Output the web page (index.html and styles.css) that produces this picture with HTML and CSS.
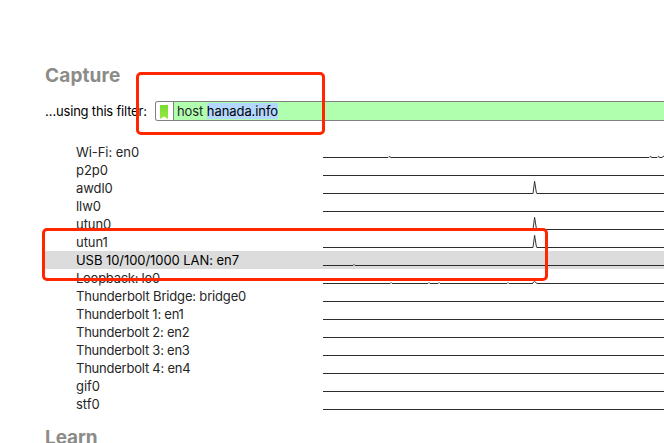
FILE: index.html
```
<!DOCTYPE html>
<html lang="en">
<head>
<meta charset="utf-8">
<title>Capture</title>
<link rel="stylesheet" href="styles.css">
</head>
<body>
<main class="page">
  <h1 class="heading">Capture</h1>
  <div class="filter">
    <label class="filter-label">…using this filter:</label>
    <div class="field">
      <span class="bookmark"><svg width="8" height="14" viewBox="0 0 8 14"><defs><linearGradient id="g" x1="0" y1="0" x2="0" y2="1"><stop offset="0" stop-color="#79dc31"/><stop offset="1" stop-color="#98e83f"/></linearGradient></defs><path d="M0 0H8V14L4 11.5L0 14Z" fill="url(#g)"/></svg></span>
      <span class="query">host <span class="selected-text">hanada.info</span></span>
    </div>
  </div>
  <ul class="interfaces">
    <li class="row"><span class="name">Wi-Fi: en0</span><svg class="spark" width="341" height="18"><path class="base" d="M0 14.5H65M68 14.5H326M329 14.5H334M337 14.5H339"/><path class="peak" d="M65 14.5L66 13.5L68 14.5M326 14.5L327 13.5L329 14.5M334 14.5L335 13.5L337 14.5L339 14.5L341 13"/></svg></li>
    <li class="row"><span class="name">p2p0</span><svg class="spark" width="341" height="18"><path class="base" d="M0 14.5H341"/></svg></li>
    <li class="row"><span class="name">awdl0</span><svg class="spark" width="341" height="18"><path class="base" d="M0 14.5H210M214 14.5H341"/><path class="peak" d="M210 14.5L211.6 2.3L213.5 14.5"/></svg></li>
    <li class="row"><span class="name">llw0</span><svg class="spark" width="341" height="18"><path class="base" d="M0 14.5H341"/></svg></li>
    <li class="row"><span class="name">utun0</span><svg class="spark" width="341" height="18"><path class="base" d="M0 14.5H210M214 14.5H341"/><path class="peak" d="M210 14.5L211.6 2.3L213.5 14.5"/></svg></li>
    <li class="row"><span class="name">utun1</span><svg class="spark" width="341" height="18"><path class="base" d="M0 14.5H210M214 14.5H341"/><path class="peak" d="M210 14.5L211.6 2.3L213.5 14.5"/></svg></li>
    <li class="row active"><span class="name">USB 10/100/1000 LAN: en7</span><svg class="spark" width="341" height="18"><path class="base" d="M0 14.5H30M32 14.5H341"/><path class="peak" d="M30 14.5L31 13.5L32 14.5"/></svg></li>
    <li class="row"><span class="name loopback">Loopback: lo0</span><svg class="spark" width="341" height="18"><path class="base" d="M0 14.5H67M69 14.5H105M107 14.5H115M117 14.5H184M186 14.5H210M214 14.5H341"/><path class="peak" d="M67 14.5L68 13.5L69 14.5M105 14.5L106 13.5L107 14.5M115 14.5L116 13.5L117 14.5M184 14.5L185 13.5L186 14.5M209 14.5L211.5 12.5L214 14.5"/></svg></li>
    <li class="row"><span class="name bridge">Thunderbolt Bridge: bridge0</span><svg class="spark" width="341" height="18"><path class="base" d="M0 14.5H341"/></svg></li>
    <li class="row"><span class="name port">Thunderbolt 1: en1</span><svg class="spark" width="341" height="18"><path class="base" d="M0 14.5H341"/></svg></li>
    <li class="row"><span class="name port">Thunderbolt 2: en2</span><svg class="spark" width="341" height="18"><path class="base" d="M0 14.5H341"/></svg></li>
    <li class="row"><span class="name port">Thunderbolt 3: en3</span><svg class="spark" width="341" height="18"><path class="base" d="M0 14.5H341"/></svg></li>
    <li class="row"><span class="name port">Thunderbolt 4: en4</span><svg class="spark" width="341" height="18"><path class="base" d="M0 14.5H341"/></svg></li>
    <li class="row"><span class="name">gif0</span><svg class="spark" width="341" height="18"><path class="base" d="M0 14.5H341"/></svg></li>
    <li class="row"><span class="name">stf0</span><svg class="spark" width="341" height="18"><path class="base" d="M0 14.5H341"/></svg></li>
  </ul>
  <h1 class="heading learn">Learn</h1>
  <div class="callout callout-filter"></div>
  <div class="callout callout-interface"></div>
</main>
</body>
</html>
```
FILE: styles.css
```
* { box-sizing: border-box; }
body {
  margin: 0;
  background: #fff;
  color: #262626;
  font: 13px/18px Inter, "Liberation Sans", sans-serif;
}
.page {
  position: relative;
  width: 664px;
  height: 443px;
  padding: 64px 0 0 45px;
  overflow: hidden;
}
.heading {
  margin: 0;
  height: 24px;
  font-size: 19px;
  line-height: 24px;
  font-weight: 700;
  color: #8b8c87;
  letter-spacing: 0.15px;
}
.filter {
  display: flex;
  margin-top: 13px;
  height: 20px;
}
.filter-label {
  width: 110px;
  line-height: 21px;
  color: #000;
  letter-spacing: -0.2px;
  white-space: nowrap;
}
.field {
  display: flex;
  flex: 1;
  border: 1px solid #808080;
  border-right: 0;
  border-radius: 3px 0 0 3px;
  background: #afffaf;
  overflow: hidden;
}
.bookmark {
  display: flex;
  align-items: center;
  width: 18px;
  padding: 1px 0 0 4px;
  border-right: 1px solid #808080;
  background: #fff;
}
.query {
  padding: 1px 0 0 3px;
  line-height: 17px;
  letter-spacing: -0.08px;
  white-space: pre;
}
.selected-text {
  display: inline-block;
  height: 16px;
  line-height: 17px;
  background: #b3d7ff;
  color: #000;
}
.interfaces {
  margin: 22px 0 0;
  padding: 0;
  list-style: none;
}
.row {
  display: flex;
  height: 18px;
  padding-left: 31px;
}
.name {
  width: 247px;
  line-height: 19px;
  letter-spacing: -0.06px;
  white-space: nowrap;
}
.loopback { letter-spacing: -0.27px; }
.bridge { letter-spacing: -0.17px; }
.port { letter-spacing: -0.23px; }
.active {
  background: #dcdcdc;
  color: #000;
}
.spark { display: block; }
.base {
  fill: none;
  stroke: #2c2c2c;
  stroke-width: 1;
}
.peak {
  fill: none;
  stroke: #333;
  stroke-width: 1;
}
.learn {
  margin-top: 13px;
  letter-spacing: -0.1px;
}
.callout {
  position: absolute;
  border: 3px solid #ff2600;
  border-radius: 5px;
}
.callout-filter {
  left: 136px;
  top: 72px;
  width: 189px;
  height: 63px;
}
.callout-interface {
  left: 42px;
  top: 228px;
  width: 506px;
  height: 53px;
}
```
